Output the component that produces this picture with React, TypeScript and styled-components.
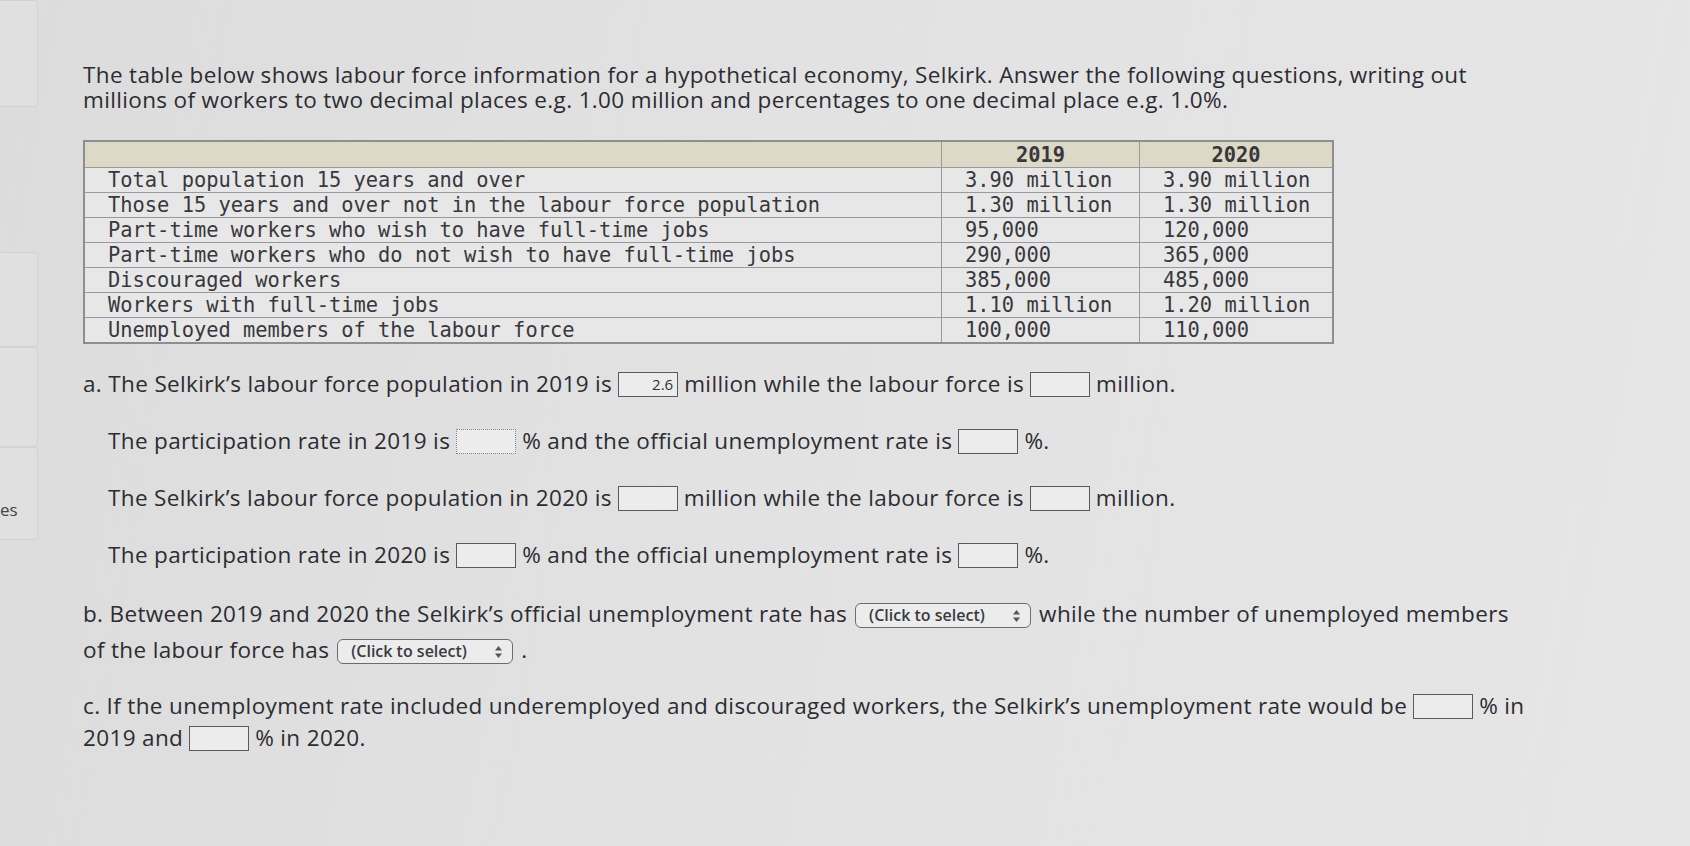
import React from "react";
import styled, { createGlobalStyle } from "styled-components";

const Global = createGlobalStyle`
  html, body { margin: 0; padding: 0; }
  body {
    width: 1690px;
    height: 846px;
    overflow: hidden;
    background: linear-gradient(100deg, #dcdcdc 0%, #e2e2e2 45%, #e6e6e6 100%);
    font-family: "Open Sans", "Liberation Sans", sans-serif;
    color: #2c2c32;
  }
`;

const Page = styled.div`
  display: flex;
  align-items: flex-start;
  height: 846px;
`;

const Sidebar = styled.div`
  width: 38px;
  flex: 0 0 38px;
  display: flex;
  flex-direction: column;
`;

const SideBox = styled.div<{ $h: number; $mt: number }>`
  height: ${(p) => p.$h}px;
  margin-top: ${(p) => p.$mt}px;
  border: 1px solid #d2d2d2;
  border-left: none;
  border-radius: 0 4px 4px 0;
  background: #e0e0e0;
  display: flex;
  align-items: flex-end;
  padding-bottom: 18px;
  box-sizing: border-box;
  font-size: 17px;
  color: #444;
  overflow: hidden;
`;

const Main = styled.main`
  margin-left: 45px;
  width: 1480px;
  padding-top: 62px;
`;

const Intro = styled.p`
  margin: 0;
  font-size: 22.5px;
  letter-spacing: 0.35px;
  line-height: 25px;
  white-space: nowrap;
`;

const Table = styled.table`
  margin-top: 28px;
  border-collapse: collapse;
  width: 1251px;
  font-family: "DejaVu Sans Mono", "Liberation Mono", monospace;
  font-size: 20.4px;
  color: #38383c;
  border: 2px solid #8e8e92;
`;

const HeadCell = styled.th<{ $w?: number }>`
  background: #dcd9c6;
  height: 25px;
  padding: 0;
  line-height: 22px;
  font-weight: bold;
  text-align: center;
  border: 1.5px solid #9a9a9e;
  width: ${(p) => (p.$w ? `${p.$w}px` : "auto")};
`;

const Cell = styled.td`
  background: #e7e7e7;
  height: 24px;
  padding: 0 0 0 23px;
  line-height: 22px;
  border: 1.5px solid #9a9a9e;
  white-space: nowrap;
`;

const Para = styled.p<{ $indent?: boolean; $lh: number; $mt: number }>`
  margin: ${(p) => p.$mt}px 0 0 ${(p) => (p.$indent ? 25 : 0)}px;
  font-size: 22.5px;
  letter-spacing: 0.35px;
  line-height: ${(p) => p.$lh}px;
  white-space: nowrap;
`;

const Box = styled.span<{ $dotted?: boolean }>`
  display: inline-block;
  width: 54px;
  height: 23px;
  vertical-align: middle;
  margin: -3px 6px 0;
  border: 1.5px ${(p) => (p.$dotted ? "dotted #7a86a0" : "solid #5a5a5e")};
  background: #ececec;
  font-size: 15px;
  letter-spacing: 0;
  line-height: 23px;
  text-align: right;
  padding-right: 4px;
  box-sizing: content-box;
  color: #333;
`;

const Select = styled.span`
  display: inline-flex;
  align-items: center;
  justify-content: space-between;
  box-sizing: border-box;
  width: 176px;
  height: 25px;
  padding: 0 9px 0 13px;
  margin: 0 8px;
  vertical-align: middle;
  border: 1.5px solid #6c6c70;
  border-radius: 6px;
  background: #ececec;
  font-size: 16px;
  letter-spacing: 0;
  font-weight: 600;
  line-height: 23px;
  color: #3a3a40;
`;

const Arrows = () => (
  <svg width="9" height="14" viewBox="0 0 9 14">
    <path d="M4.5 1 L8 5.5 H1 Z" fill="#555" />
    <path d="M4.5 13 L8 8.5 H1 Z" fill="#555" />
  </svg>
);

const rows: [string, string, string][] = [
  ["Total population 15 years and over", "3.90 million", "3.90 million"],
  ["Those 15 years and over not in the labour force population", "1.30 million", "1.30 million"],
  ["Part-time workers who wish to have full-time jobs", "95,000", "120,000"],
  ["Part-time workers who do not wish to have full-time jobs", "290,000", "365,000"],
  ["Discouraged workers", "385,000", "485,000"],
  ["Workers with full-time jobs", "1.10 million", "1.20 million"],
  ["Unemployed members of the labour force", "100,000", "110,000"],
];

export default function App() {
  return (
    <>
      <Global />
      <Page>
        <Sidebar>
          <SideBox $h={107} $mt={0} />
          <SideBox $h={95} $mt={145} />
          <SideBox $h={100} $mt={0} />
          <SideBox $h={93} $mt={0}>es</SideBox>
        </Sidebar>
        <Main>
          <Intro>
            The table below shows labour force information for a hypothetical economy, Selkirk. Answer the following
            questions, writing out
            <br />
            millions of workers to two decimal places e.g. 1.00 million and percentages to one decimal place e.g. 1.0%.
          </Intro>
          <Table>
            <thead>
              <tr>
                <HeadCell $w={856}></HeadCell>
                <HeadCell $w={197}>2019</HeadCell>
                <HeadCell>2020</HeadCell>
              </tr>
            </thead>
            <tbody>
              {rows.map((r) => (
                <tr key={r[0]}>
                  <Cell>{r[0]}</Cell>
                  <Cell>{r[1]}</Cell>
                  <Cell>{r[2]}</Cell>
                </tr>
              ))}
            </tbody>
          </Table>
          <Para $lh={28} $mt={26}>
            a. The Selkirk’s labour force population in 2019 is<Box>2.6</Box>million while the labour force is
            <Box />
            million.
          </Para>
          <Para $indent $lh={28} $mt={29}>
            The participation rate in 2019 is<Box $dotted />% and the official unemployment rate is<Box />%.
          </Para>
          <Para $indent $lh={28} $mt={29}>
            The Selkirk’s labour force population in 2020 is<Box />million while the labour force is<Box />million.
          </Para>
          <Para $indent $lh={28} $mt={29}>
            The participation rate in 2020 is<Box />% and the official unemployment rate is<Box />%.
          </Para>
          <Para $lh={36} $mt={27}>
            b. Between 2019 and 2020 the Selkirk’s official unemployment rate has
            <Select>
              (Click to select) <Arrows />
            </Select>
            while the number of unemployed members
            <br />
            of the labour force has
            <Select>
              (Click to select) <Arrows />
            </Select>
            .
          </Para>
          <Para $lh={32} $mt={22}>
            c. If the unemployment rate included underemployed and discouraged workers, the Selkirk’s unemployment rate
            would be<Box />% in
            <br />
            2019 and<Box />% in 2020.
          </Para>
        </Main>
      </Page>
    </>
  );
}
